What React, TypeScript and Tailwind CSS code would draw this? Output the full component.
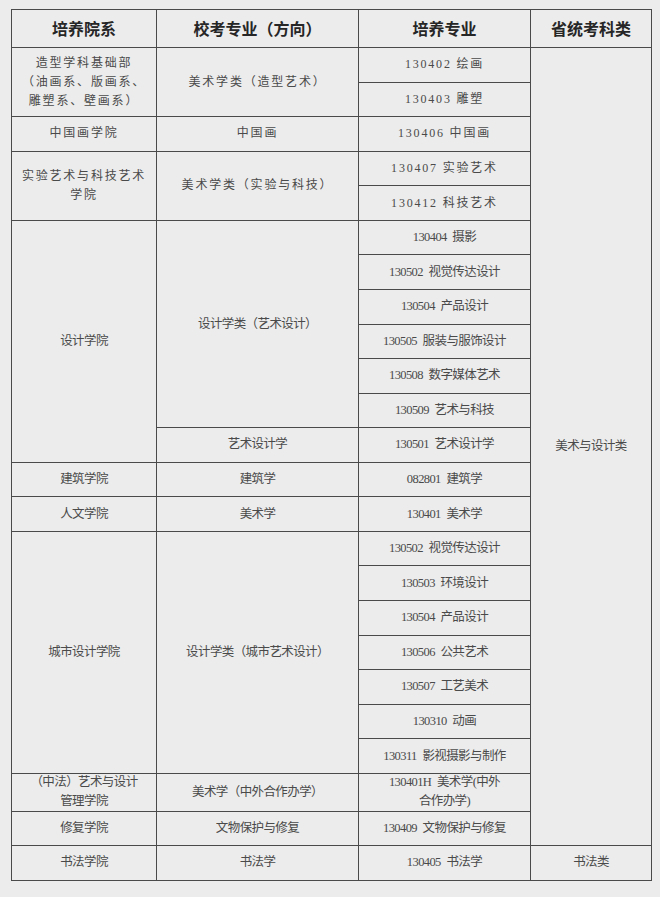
import type { ReactNode } from 'react';

const body = "font-['Liberation_Serif','Noto_Sans_CJK_SC',serif]";

function Cell({
  children,
  span = '',
  head = false,
  wide = false,
}: {
  children: ReactNode;
  span?: string;
  head?: boolean;
  wide?: boolean;
}) {
  const text = head
    ? "font-['Noto_Sans_CJK_SC',sans-serif] font-bold text-[16px] text-[#262626]"
    : `${body} text-[#4a4a4a] ${wide ? 'text-[12px] tracking-[1.8px]' : 'text-[12.5px] tracking-[-0.6px]'}`;
  // widen the gap between code and name in the tight rows
  const content =
    typeof children === 'string' && !wide ? children.replace(' ', '\u2002') : children;
  return (
    <div
      className={`flex items-center justify-center text-center leading-[19px] border-r border-b border-[#4a4a4a] ${span} ${text}`}
    >
      <div>{content}</div>
    </div>
  );
}

export default function App() {
  return (
    <div className="w-[660px] h-[897px] bg-[#ececec] pt-[9px] pl-[11px]">
      <div className="grid w-[641px] grid-cols-[145px_202px_172px_121px] grid-rows-[38px_repeat(21,34.57px)_38px_34.3px_34.7px] border-l border-t border-[#4a4a4a]">
        {/* header */}
        <Cell head>培养院系</Cell>
        <Cell head>校考专业（方向）</Cell>
        <Cell head>培养专业</Cell>
        <Cell head>省统考科类</Cell>

        {/* 造型学科基础部 */}
        <Cell span="row-span-2" wide>
          造型学科基础部
          <br />
          （油画系、版画系、
          <br />
          雕塑系、壁画系）
        </Cell>
        <Cell span="row-span-2" wide>美术学类（造型艺术）</Cell>
        <Cell wide>130402 绘画</Cell>
        <Cell span="row-span-[23]">美术与设计类</Cell>
        <Cell wide>130403 雕塑</Cell>

        {/* 中国画学院 */}
        <Cell wide>中国画学院</Cell>
        <Cell wide>中国画</Cell>
        <Cell wide>130406 中国画</Cell>

        {/* 实验艺术与科技艺术学院 */}
        <Cell span="row-span-2" wide>
          实验艺术与科技艺术
          <br />
          学院
        </Cell>
        <Cell span="row-span-2" wide>美术学类（实验与科技）</Cell>
        <Cell wide>130407 实验艺术</Cell>
        <Cell wide>130412 科技艺术</Cell>

        {/* 设计学院 */}
        <Cell span="row-span-7">设计学院</Cell>
        <Cell span="row-span-6">设计学类（艺术设计）</Cell>
        <Cell>130404 摄影</Cell>
        <Cell>130502 视觉传达设计</Cell>
        <Cell>130504 产品设计</Cell>
        <Cell>130505 服装与服饰设计</Cell>
        <Cell>130508 数字媒体艺术</Cell>
        <Cell>130509 艺术与科技</Cell>
        <Cell>艺术设计学</Cell>
        <Cell>130501 艺术设计学</Cell>

        {/* 建筑学院 / 人文学院 */}
        <Cell>建筑学院</Cell>
        <Cell>建筑学</Cell>
        <Cell>082801 建筑学</Cell>
        <Cell>人文学院</Cell>
        <Cell>美术学</Cell>
        <Cell>130401 美术学</Cell>

        {/* 城市设计学院 */}
        <Cell span="row-span-7">城市设计学院</Cell>
        <Cell span="row-span-7">设计学类（城市艺术设计）</Cell>
        <Cell>130502 视觉传达设计</Cell>
        <Cell>130503 环境设计</Cell>
        <Cell>130504 产品设计</Cell>
        <Cell>130506 公共艺术</Cell>
        <Cell>130507 工艺美术</Cell>
        <Cell>130310 动画</Cell>
        <Cell>130311 影视摄影与制作</Cell>

        {/* 中法 */}
        <Cell>
          （中法）艺术与设计
          <br />
          管理学院
        </Cell>
        <Cell>美术学（中外合作办学）</Cell>
        <Cell>
          130401H{'\u2002'}美术学(中外
          <br />
          合作办学)
        </Cell>

        {/* 修复学院 */}
        <Cell>修复学院</Cell>
        <Cell>文物保护与修复</Cell>
        <Cell>130409 文物保护与修复</Cell>

        {/* 书法学院 */}
        <Cell>书法学院</Cell>
        <Cell>书法学</Cell>
        <Cell>130405 书法学</Cell>
        <Cell>书法类</Cell>
      </div>
    </div>
  );
}
